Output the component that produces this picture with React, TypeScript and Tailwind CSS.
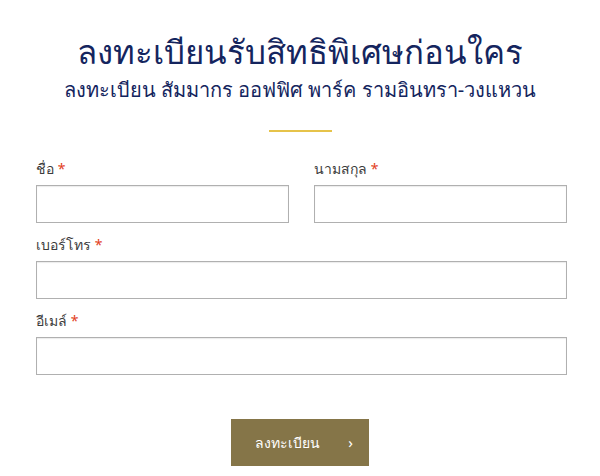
import React from "react";

function Field({ label, className = "" }: { label: string; className?: string }) {
  return (
    <div className={`flex flex-col ${className}`}>
      <label className="text-[14px] leading-[20px] text-[#3c3c3c] mb-[6px]">
        {label} <span className="text-[#e2401c]">*</span>
      </label>
      <div className="h-[38px] border border-[#b0b0b0] bg-white shadow-[inset_0_1px_1px_rgba(0,0,0,0.08)]" />
    </div>
  );
}

export default function App() {
  return (
    <div
      className="w-[600px] h-[476px] bg-white overflow-hidden"
      style={{ fontFamily: '"Noto Sans", "Liberation Sans", sans-serif' }}
    >
      <div className="pt-[30px] flex flex-col items-center">
        <h1 className="text-[33px] leading-[44px] text-[#14255e] font-normal">ลงทะเบียนรับสิทธิพิเศษก่อนใคร</h1>
        <p className="mt-[2px] text-[20px] leading-[28px] text-[#14255e]">ลงทะเบียน สัมมากร ออฟฟิศ พาร์ค รามอินทรา-วงแหวน</p>
        <div className="mt-[26px] w-[63px] h-[2px] bg-[#e6c34a]" />
      </div>
      <div className="pl-[36px] pr-[33px] mt-[27px] flex flex-col gap-[12px]">
        <div className="grid grid-cols-2 gap-[25px]">
          <Field label="ชื่อ" />
          <Field label="นามสกุล" />
        </div>
        <Field label="เบอร์โทร" />
        <Field label="อีเมล์" />
      </div>
      <div className="mt-[44px] flex justify-center">
        <button className="w-[138px] h-[47px] bg-[#857548] text-white text-[14px] flex items-center justify-center gap-[28px] pl-[8px]">
          <span>ลงทะเบียน</span>
          <span className="text-[15px]">›</span>
        </button>
      </div>
    </div>
  );
}
